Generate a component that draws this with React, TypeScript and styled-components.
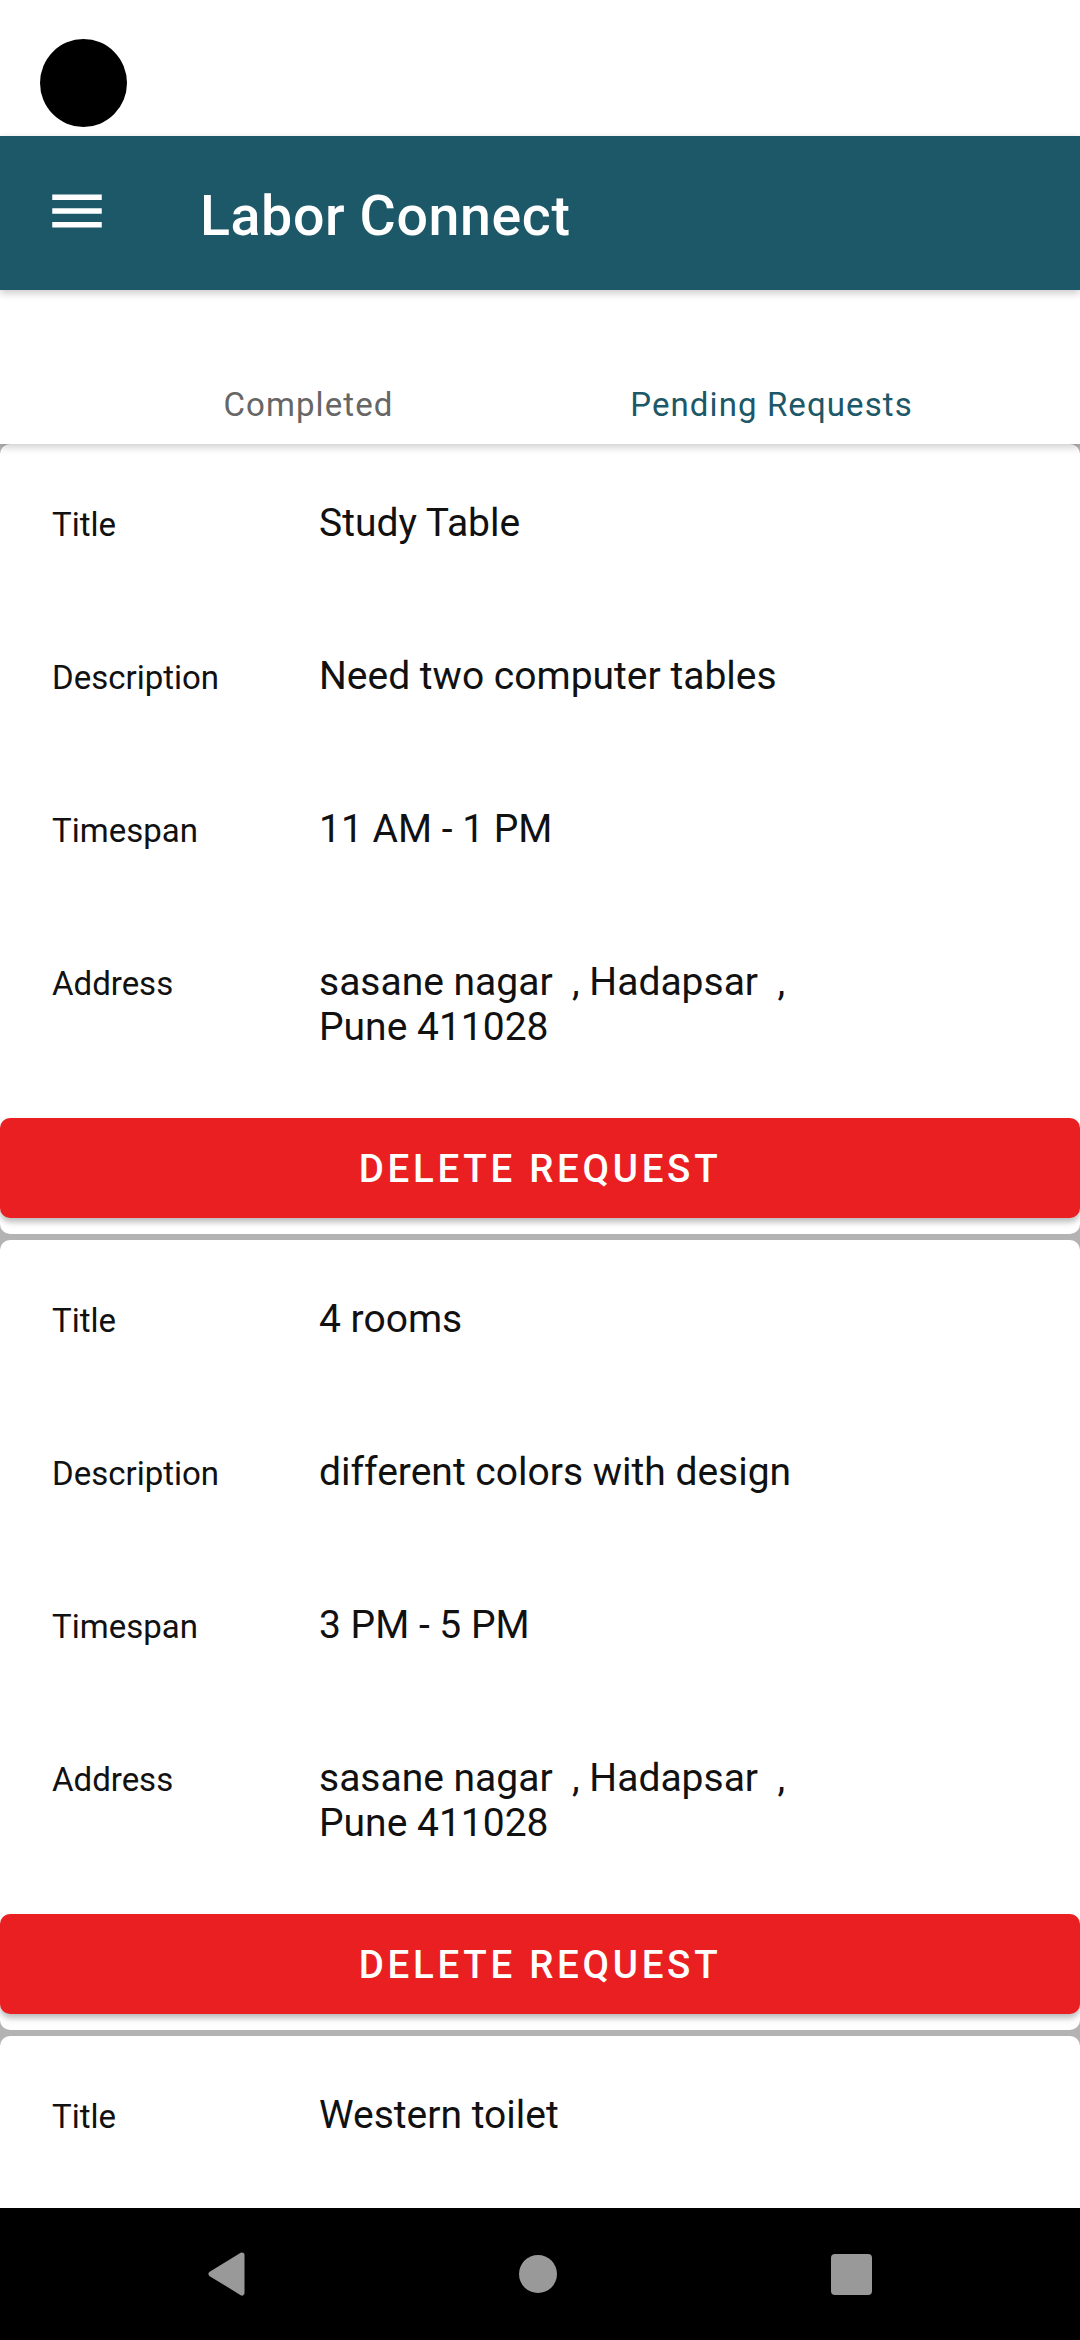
import React from "react";
import styled, { createGlobalStyle } from "styled-components";

const GlobalStyle = createGlobalStyle`
  html, body { margin: 0; padding: 0; background: #ffffff; }
  body { font-family: Roboto, "Noto Sans", "Liberation Sans", sans-serif; }
  * { box-sizing: border-box; }
`;

const TEAL = "#1c5868";

const Screen = styled.div`
  width: 1080px;
  height: 2340px;
  display: flex;
  flex-direction: column;
  overflow: hidden;
  background: #ffffff;
`;

const StatusBar = styled.div`
  height: 136px;
  flex: none;
  display: flex;
  align-items: flex-start;
  padding: 39px 0 0 40px;
  background: #ffffff;
`;

const CameraHole = styled.div`
  width: 87px;
  height: 88px;
  border-radius: 50%;
  background: #000000;
`;

const AppBar = styled.header`
  height: 154px;
  flex: none;
  display: flex;
  align-items: center;
  padding-left: 44px;
  background: ${TEAL};
  position: relative;
  z-index: 3;
  box-shadow: 0 3px 8px rgba(0, 0, 0, 0.22);
`;

const MenuIcon = styled.svg`
  width: 66px;
  height: 66px;
  flex: none;
  margin-top: -4px;
`;

const AppTitle = styled.h1`
  margin: 8px 0 0 90px;
  font-size: 55.5px;
  font-weight: 500;
  letter-spacing: 0.6px;
  color: #ffffff;
  line-height: 64px;
`;

const TabBar = styled.nav`
  height: 154px;
  flex: none;
  display: flex;
  align-items: flex-end;
  padding: 0 77px 20px;
  background: #ffffff;
  position: relative;
  z-index: 2;
  box-shadow: 0 3px 8px rgba(0, 0, 0, 0.2);
`;

const Tab = styled.div<{ $active?: boolean }>`
  flex: 1;
  text-align: center;
  font-size: 33px;
  line-height: 39px;
  letter-spacing: 1.1px;
  color: ${(p) => (p.$active ? TEAL : "#666666")};
`;

const Content = styled.main`
  flex: 1;
  min-height: 0;
  overflow: hidden;
  display: flex;
  flex-direction: column;
  gap: 6px;
  background: #b3b3b3;
`;

const Card = styled.section`
  flex: none;
  display: flex;
  flex-direction: column;
  padding-top: 3px;
  background: #ffffff;
  border-radius: 10px;
`;

const Row = styled.div`
  display: flex;
  align-items: baseline;
  padding: 54px 52px;
`;

const Label = styled.div`
  width: 267px;
  flex: none;
  font-size: 33px;
  line-height: 39px;
  color: #111111;
`;

const Value = styled.div`
  flex: 1;
  font-size: 39px;
  line-height: 45px;
  color: #111111;
  white-space: pre-wrap;
`;

const DeleteButton = styled.button`
  margin: 14px 0 16px;
  height: 100px;
  width: 100%;
  border: none;
  border-radius: 10px;
  background: #ea1f21;
  color: #ffffff;
  font-family: Roboto, "Noto Sans", sans-serif;
  font-size: 38.5px;
  font-weight: 500;
  letter-spacing: 3.7px;
  text-transform: uppercase;
  box-shadow: 0 4px 6px rgba(0, 0, 0, 0.28);
`;

const NavBar = styled.footer`
  height: 132px;
  flex: none;
  display: flex;
  align-items: center;
  justify-content: center;
  gap: 274px;
  background: #000000;
`;

const NavHome = styled.div`
  width: 38px;
  height: 38px;
  border-radius: 50%;
  background: #999999;
`;

const NavRecents = styled.div`
  width: 41px;
  height: 41px;
  border-radius: 4px;
  background: #999999;
`;

type Request = {
  title: string;
  description: string;
  timespan: string;
  address: string;
};

const requests: Request[] = [
  {
    title: "Study Table",
    description: "Need two computer tables",
    timespan: "11 AM - 1 PM",
    address: "sasane nagar  , Hadapsar  ,\nPune 411028",
  },
  {
    title: "4 rooms",
    description: "different colors with design",
    timespan: "3 PM - 5 PM",
    address: "sasane nagar  , Hadapsar  ,\nPune 411028",
  },
  {
    title: "Western toilet",
    description: "Need a western toilet",
    timespan: "10 AM - 12 PM",
    address: "sasane nagar  , Hadapsar  ,\nPune 411028",
  },
];

const Field = ({ label, value }: { label: string; value: string }) => (
  <Row>
    <Label>{label}</Label>
    <Value>{value}</Value>
  </Row>
);

export default function App() {
  return (
    <>
      <GlobalStyle />
      <Screen>
        <StatusBar>
          <CameraHole />
        </StatusBar>
        <AppBar>
          <MenuIcon viewBox="0 0 24 24" aria-label="menu">
            <path fill="#ffffff" d="M3 18h18v-2H3v2zm0-5h18v-2H3v2zm0-7v2h18V6H3z" />
          </MenuIcon>
          <AppTitle>Labor Connect</AppTitle>
        </AppBar>
        <TabBar>
          <Tab>Completed</Tab>
          <Tab $active>Pending Requests</Tab>
        </TabBar>
        <Content>
          {requests.map((r, i) => (
            <Card key={i}>
              <Field label="Title" value={r.title} />
              <Field label="Description" value={r.description} />
              <Field label="Timespan" value={r.timespan} />
              <Field label="Address" value={r.address} />
              <DeleteButton>Delete Request</DeleteButton>
            </Card>
          ))}
        </Content>
        <NavBar>
          <svg width="37" height="44" viewBox="0 0 37 44" aria-label="back">
            <path
              d="M34 3 L3 22 L34 41 Z"
              fill="#999999"
              stroke="#999999"
              strokeWidth="5"
              strokeLinejoin="round"
            />
          </svg>
          <NavHome />
          <NavRecents />
        </NavBar>
      </Screen>
    </>
  );
}
